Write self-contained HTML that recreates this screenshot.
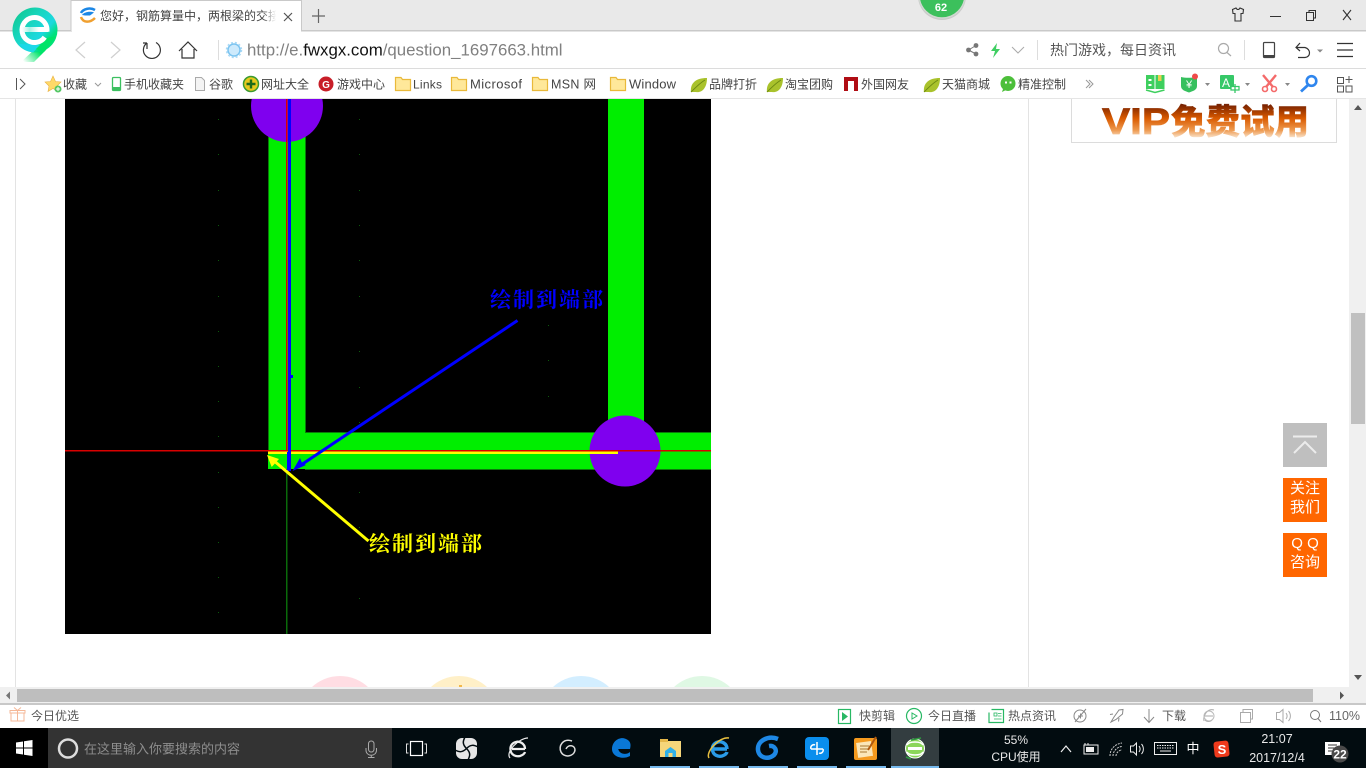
<!DOCTYPE html>
<html><head><meta charset="utf-8"><title>question</title>
<style>
html,body{margin:0;padding:0;width:1366px;height:768px;overflow:hidden;background:#fff}
svg{display:block;position:absolute;left:0;top:0}
text{white-space:pre}
</style></head><body>
<svg width="1366" height="768" viewBox="0 0 1366 768" font-family="'Liberation Sans','Noto Sans CJK SC',sans-serif" font-size="12" fill="#555">
<defs>
<linearGradient id="vip" gradientUnits="userSpaceOnUse" x1="0" y1="103" x2="0" y2="137"><stop offset="0" stop-color="#6b1a00"/><stop offset=".45" stop-color="#d95a00"/><stop offset=".8" stop-color="#ee9a50"/><stop offset="1" stop-color="#f8dcc0"/></linearGradient>
<linearGradient id="fade" x1="0" x2="1" y1="0" y2="0"><stop offset="0" stop-color="#fff" stop-opacity="0"/><stop offset="1" stop-color="#fff"/></linearGradient>
<linearGradient id="lg" gradientUnits="userSpaceOnUse" x1="14" y1="12" x2="56" y2="50"><stop offset="0" stop-color="#10c890"/><stop offset=".35" stop-color="#18d6c0"/><stop offset=".62" stop-color="#1cd8e0"/><stop offset=".78" stop-color="#00e080"/><stop offset="1" stop-color="#00e468"/></linearGradient>
<linearGradient id="lg2" gradientUnits="userSpaceOnUse" x1="48" y1="40" x2="24" y2="62"><stop offset="0" stop-color="#00e468"/><stop offset=".45" stop-color="#00e468"/><stop offset="1" stop-color="#00e468" stop-opacity="0"/></linearGradient>
<linearGradient id="lbar" gradientUnits="userSpaceOnUse" x1="22" y1="0" x2="48" y2="0"><stop offset="0" stop-color="#fff"/><stop offset=".3" stop-color="#a8f0e4"/><stop offset=".65" stop-color="#fff"/></linearGradient>
<clipPath id="main"><rect x="0" y="99" width="1366" height="588"/></clipPath>
<clipPath id="img"><rect x="65" y="99" width="646" height="535"/></clipPath>
<g id="folder"><path d="M-7.500-6.500h5.500l1.500 2h8v11h-15z" fill="#ffe89a" stroke="#e9b93a" stroke-width="1.200"/></g>
<g id="leaf"><path d="M-8 7C-9-2-3-7 8-7 8 3 3 8-3 7-5 7-6 7-8 7Z" fill="#a9c22c"/><path d="M-8 7C-3 2 1-2 6-5" stroke="#6d8a12" fill="none"/></g>
</defs>

<!-- page -->
<rect width="1366" height="768" fill="#fff"/>
<g clip-path="url(#main)">
<rect x="15" y="99" width="1" height="589" fill="#e3e3e3"/>
<rect x="1028" y="99" width="1" height="589" fill="#e3e3e3"/>
<circle cx="340" cy="717" r="41" fill="#ffdde3"/>
<circle cx="459" cy="717" r="41" fill="#fff0c8"/>
<rect x="459" y="685" width="3" height="3" fill="#f2b84a"/>
<circle cx="581" cy="717" r="41" fill="#d3eeff"/>
<circle cx="702" cy="717" r="41" fill="#dff8e4"/>
</g>

<!-- CAD image -->
<rect x="65" y="99" width="646" height="535" fill="#000"/>
<g clip-path="url(#img)">
<g fill="#0b5a0b">
<rect x="218" y="119" width="1" height="1"/><rect x="218" y="154" width="1" height="1"/><rect x="218" y="190" width="1" height="1"/><rect x="218" y="225" width="1" height="1"/><rect x="218" y="260" width="1" height="1"/><rect x="218" y="296" width="1" height="1"/><rect x="218" y="331" width="1" height="1"/><rect x="218" y="366" width="1" height="1"/><rect x="218" y="401" width="1" height="1"/><rect x="218" y="436" width="1" height="1"/><rect x="218" y="472" width="1" height="1"/><rect x="218" y="507" width="1" height="1"/><rect x="218" y="542" width="1" height="1"/><rect x="218" y="577" width="1" height="1"/><rect x="218" y="612" width="1" height="1"/>
<rect x="359" y="119" width="1" height="1"/><rect x="359" y="154" width="1" height="1"/><rect x="359" y="190" width="1" height="1"/><rect x="359" y="225" width="1" height="1"/><rect x="359" y="260" width="1" height="1"/><rect x="359" y="296" width="1" height="1"/><rect x="359" y="351" width="1" height="1"/><rect x="359" y="387" width="1" height="1"/><rect x="359" y="422" width="1" height="1"/><rect x="359" y="492" width="1" height="1"/><rect x="359" y="527" width="1" height="1"/><rect x="359" y="598" width="1" height="1"/>
<rect x="548" y="325" width="1" height="1"/><rect x="548" y="360" width="1" height="1"/><rect x="548" y="396" width="1" height="1"/>
</g>
<g shape-rendering="crispEdges">
<rect x="268" y="99" width="37" height="370" fill="#00ee00"/>
<rect x="268" y="432" width="443" height="37" fill="#00ee00"/>
<rect x="608" y="99" width="36" height="334" fill="#00ee00"/>
<rect x="268" y="99" width="1" height="351" fill="#0a7a0a"/>
<rect x="305" y="99" width="1" height="333" fill="#0a7a0a"/>
<rect x="305" y="432" width="406" height="1" fill="#0a7a0a"/>
<rect x="305" y="469" width="406" height="1" fill="#0a7a0a"/>
</g>
<circle cx="287" cy="106" r="36" fill="#7f00ef"/>
<circle cx="625" cy="451" r="35.500" fill="#7f00ef"/>
<g shape-rendering="crispEdges">
<rect x="268" y="451" width="350" height="3" fill="#ffff00"/>
<rect x="65" y="450" width="646" height="1.500" fill="#d80000"/>
<rect x="286" y="99" width="1.500" height="352" fill="#d80000"/>
<rect x="286" y="470" width="1.500" height="164" fill="#0a6a0a"/>
<rect x="288" y="99" width="3" height="353" fill="#0000ff"/>
<rect x="287" y="452" width="4" height="19" fill="#0000ff"/>
<rect x="290" y="375" width="3" height="3" fill="#0000ff"/>
</g>
<path d="M517.500 320.500L298 467" stroke="#0000ff" stroke-width="3" fill="none"/>
<path d="M292.500 471L300 458L302 463L306 465Z" fill="#0000ff"/>
<path d="M368.500 541L273 460" stroke="#ffff00" stroke-width="3" fill="none"/>
<path d="M267 455L279 459L271.700 467Z" fill="#ffff00"/>
<text x="490" y="307" font-family="'Noto Serif CJK SC',serif" font-size="21" font-weight="700" fill="#0000ff" letter-spacing="2">绘制到端部</text>
<text x="369" y="551" font-family="'Noto Serif CJK SC',serif" font-size="21" font-weight="700" fill="#ffff00" letter-spacing="2">绘制到端部</text>
</g>

<!-- VIP banner -->
<path d="M1071.500 99V142.500H1336.500V99" fill="#fff" stroke="#dcdcdc"/>
<text x="1102" y="134" font-family="'Liberation Sans',sans-serif" font-weight="700" font-size="37" fill="url(#vip)" stroke="url(#vip)" stroke-width=".8" textLength="68" lengthAdjust="spacingAndGlyphs">VIP</text>
<text x="1171" y="134" font-family="'Noto Sans CJK SC',sans-serif" font-weight="900" font-size="34.500" fill="url(#vip)" stroke="url(#vip)" stroke-width=".5">免费试用</text>

<!-- side buttons -->
<rect x="1283" y="423" width="44" height="44" fill="#bfbfbf"/>
<path d="M1293 436.500H1317M1294 453L1305 442L1316 453" stroke="#ececec" stroke-width="2" fill="none"/>
<rect x="1283" y="478" width="44" height="44" fill="#ff6600"/>
<rect x="1283" y="533" width="44" height="44" fill="#ff6600"/>
<g fill="#fff" font-size="15" text-anchor="middle">
<text x="1305" y="493">关注</text><text x="1305" y="512">我们</text>
<text x="1305" y="548">Q Q</text><text x="1305" y="567">咨询</text>
</g>

<!-- scrollbars -->
<rect x="1349" y="99" width="17" height="589" fill="#f0f0f0"/>
<rect x="1351" y="313" width="14" height="111" fill="#c0c0c0"/>
<path d="M1354 110L1358 105L1362 110Z" fill="#555"/>
<path d="M1354 675L1358 680L1362 675Z" fill="#555"/>
<rect x="0" y="687" width="1366" height="16" fill="#f0f0f0"/>
<rect x="17" y="689" width="1296" height="13" fill="#bebebe"/>
<path d="M10 691.500L6 695.500L10 699.500Z" fill="#777"/>
<path d="M1340 691.500L1344 695.500L1340 699.500Z" fill="#555"/>
<rect x="0" y="703" width="1366" height="2" fill="#c8c8c8"/>

<!-- tab strip -->
<rect x="0" y="0" width="1366" height="30" fill="#e9e9e9"/>
<rect x="0" y="30" width="1366" height="1.500" fill="#c9c9c9"/>
<path d="M71 31V.500H301.500V31" fill="#fff" stroke="#c9c9c9"/>
<rect x="72" y="30" width="229" height="2" fill="#fff"/>
<path d="M81 13C83 9 90 7 95 10" stroke="#1b87e6" stroke-width="2.500" fill="none"/>
<path d="M82 15C84 12 90 11 94 12.500L90 15.500H85Z" fill="#1b87e6"/>
<path d="M81 17C83 23 90 23 95 18" stroke="#f0a030" stroke-width="2.500" fill="none"/>
<text x="100" y="20" fill="#444">您好，钢筋算量中，两根梁的交接</text>
<rect x="262" y="7" width="14" height="18" fill="url(#fade)"/>
<rect x="276" y="7" width="8" height="18" fill="#fff"/>
<path d="M284 13L292 21M292 13L284 21" stroke="#555" stroke-width="1.200"/>
<path d="M318.500 9V23M312 16H325" stroke="#666" stroke-width="1.200" fill="none"/>
<!-- badge -->
<circle cx="942" cy="-4" r="24" fill="#aaa" opacity=".5"/>
<circle cx="942" cy="-5" r="23" fill="#3cc05c" stroke="#cfd8d0" stroke-width="1.500"/>
<text x="941" y="11" fill="#fff" font-size="11" font-weight="700" text-anchor="middle">62</text>
<!-- window controls -->
<path d="M1232.500 9.500L1236 8C1237 10 1239 10 1240 8L1243.500 9.500L1243 13.500H1241V21H1235V13.500H1233Z" fill="none" stroke="#333" stroke-width="1.100"/>
<rect x="1270" y="16" width="11" height="1" fill="#333"/>
<path d="M1306.500 12.500H1313.500V20.500H1306.500ZM1309 12.500V10.500H1315.500V18H1313.500" fill="none" stroke="#333"/>
<path d="M1343 10L1351 20M1351 10L1343 20" stroke="#333" stroke-width="1.100"/>

<!-- toolbar -->
<rect x="0" y="31.500" width="1366" height="36.500" fill="#fff"/>
<rect x="0" y="68" width="1366" height="1" fill="#dcdcdc"/>
<path d="M85 42L76 50L85 58" stroke="#cfcfcf" fill="none" stroke-width="1.200"/>
<path d="M111 42L120 50L111 58" stroke="#cfcfcf" fill="none" stroke-width="1.200"/>
<path d="M147 43A8.500 8.500 0 1 0 156 42.500M147 43V49M147 43H143" stroke="#333" fill="none" stroke-width="1.200"/>
<path d="M179 51L188 42L197 51M182 49V58H194V49" stroke="#333" fill="none" stroke-width="1.200"/>
<rect x="218" y="40" width="1" height="20" fill="#ddd"/>
<circle cx="234" cy="50" r="6" fill="#cdeafc" stroke="#7cc4f0" stroke-width="1.500"/>
<circle cx="234" cy="50" r="7.500" fill="none" stroke="#a8d9f6" stroke-width="1.500" stroke-dasharray="2 2"/>
<text x="247" y="55.500" font-size="16.850" fill="#808080">http://e.<tspan fill="#111">fwxgx.com</tspan>/question_1697663.html</text>
<g fill="#777"><circle cx="968.500" cy="50" r="2.400"/><circle cx="976" cy="45.500" r="2.400"/><circle cx="976" cy="54" r="2.400"/></g>
<path d="M968.500 50L976 45.500M968.500 50L976 54" stroke="#777"/>
<path d="M997 43L991 51H995L993 58L1000 49H996Z" fill="#3fce62"/>
<path d="M1012 47L1018 53L1024 47" stroke="#aaa" fill="none"/>
<rect x="1037" y="40" width="1" height="20" fill="#ddd"/>
<text x="1050" y="55" font-size="14" fill="#555">热门游戏，每日资讯</text>
<circle cx="1223.500" cy="48.500" r="5" fill="none" stroke="#aaa" stroke-width="1.200"/><path d="M1227 52.500L1231 56" stroke="#aaa" stroke-width="1.200"/>
<rect x="1244" y="40" width="1" height="20" fill="#ddd"/>
<rect x="1263.500" y="42.500" width="11" height="15" rx="1" fill="none" stroke="#444" stroke-width="1.200"/><rect x="1264" y="55" width="10" height="3" fill="#444"/>
<path d="M1300 43L1296 47.500L1300 51M1296 47.500H1305C1311 49 1311 57 1305 57.500H1298" stroke="#333" fill="none" stroke-width="1.200"/>
<path d="M1317 49.500L1320 52.500L1323 49.500Z" fill="#888"/>
<path d="M1337 43.500H1353M1337 50H1353M1337 56.500H1353" stroke="#333" stroke-width="1.200"/>

<!-- bookmarks -->
<rect x="0" y="69" width="1366" height="30" fill="#fff"/>
<rect x="0" y="98" width="1366" height="1" fill="#e5e5e5"/>
<path d="M16.500 78V90M20 79L25 84L20 89" stroke="#555" fill="none"/>
<path d="M53 76L55.500 81.500L61 82L57 86L58 91.500L53 88.500L48 91.500L49 86L45 82L50.500 81.500Z" fill="#ffd968" stroke="#e8b040" stroke-width=".6"/>
<circle cx="58" cy="89" r="3.500" fill="#55c765"/><path d="M58 87V91M56 89H60" stroke="#fff"/>
<path d="M95 83L98 86L101 83" stroke="#999" fill="none"/>
<rect x="112.500" y="77.500" width="8" height="13" rx="1" fill="none" stroke="#3cc060" stroke-width="1.300"/><rect x="113" y="87" width="7" height="4" fill="#3cc060"/>
<path d="M195.500 77.500H201.500L204.500 80.500V90.500H195.500Z" fill="#f4f4f4" stroke="#aaa"/>
<circle cx="251" cy="84" r="7.500" fill="#e6c91c"/><circle cx="251" cy="84" r="7.500" fill="none" stroke="#3a9a30" stroke-width="1.500"/><path d="M251 79.500V88.500M246.500 84H255.500" stroke="#1d6a1a" stroke-width="2.400"/>
<circle cx="326" cy="84" r="7.500" fill="#c81e28"/><text x="326" y="88" fill="#fff" font-size="10" font-weight="700" text-anchor="middle">G</text>
<use href="#folder" x="403" y="84"/><use href="#folder" x="459" y="84"/><use href="#folder" x="540" y="84"/><use href="#folder" x="618" y="84"/>
<use href="#leaf" x="699" y="85"/><use href="#leaf" x="775" y="85"/><use href="#leaf" x="932" y="85"/>
<path d="M844 77H858V91H854V81H848V91H844Z" fill="#b00d14"/>
<circle cx="1008" cy="83.500" r="7.500" fill="#4cbf3a"/><path d="M1003 89L1002 92L1006 90Z" fill="#4cbf3a"/><rect x="1005" y="81.500" width="2" height="2" fill="#fff"/><rect x="1009.500" y="81.500" width="2" height="2" fill="#fff"/>
<g fill="#444">
<text x="63" y="88.500">收藏</text>
<text x="124" y="88.500">手机收藏夹</text>
<text x="209" y="88.500">谷歌</text>
<text x="261" y="88.500">网址大全</text>
<text x="337" y="88.500">游戏中心</text>
<text x="413" y="88.500" textLength="29">Links</text>
<text x="470" y="88.500" font-size="13" textLength="52">Microsof</text>
<text x="551" y="88.500" font-size="12.500" textLength="45">MSN 网</text>
<text x="629" y="88.500" font-size="13" textLength="47">Window</text>
<text x="709" y="88.500">品牌打折</text>
<text x="785" y="88.500">淘宝团购</text>
<text x="861" y="88.500">外国网友</text>
<text x="942" y="88.500">天猫商城</text>
<text x="1018" y="88.500">精准控制</text>
</g>
<path d="M1086 80L1090 84L1086 88M1089 80L1093 84L1089 88" stroke="#999" fill="none"/>
<!-- right toolbar icons -->
<path d="M1146 75H1154.500V89H1146ZM1155.500 75H1164.500V89H1155.500Z" fill="#3ecf5e"/><path d="M1146 90L1155 92.500L1164.500 90" stroke="#3ecf5e" stroke-width="1.500" fill="none"/><rect x="1158" y="75" width="3.500" height="6" fill="#e8d050"/><rect x="1148.500" y="79" width="3" height="2" fill="#fff"/><rect x="1148.500" y="84" width="3" height="2" fill="#fff"/>
<path d="M1181 77C1186 78 1190 78 1197 77V86C1197 90 1193 91 1189 92.500C1185 91 1181 90 1181 86Z" fill="#36c05e"/><text x="1189" y="88" fill="#fff" font-size="11" text-anchor="middle">¥</text><circle cx="1195" cy="76.500" r="3" fill="#f04a4a"/>
<path d="M1205 83L1207.500 86L1210 83Z" fill="#888"/>
<rect x="1220" y="75" width="14" height="14" rx="1" fill="#36c868"/><text x="1226" y="87" fill="#fff" font-size="12" text-anchor="middle">A</text><path d="M1235 84V93M1231 86.500H1239V90H1231Z" stroke="#36c868" fill="#fff" stroke-width="1.300"/>
<path d="M1245 83L1247.500 86L1250 83Z" fill="#888"/>
<path d="M1263 75L1273 87M1276 75L1266 87" stroke="#f46a6a" stroke-width="2.400"/><circle cx="1265" cy="89" r="2.500" fill="none" stroke="#f46a6a" stroke-width="1.600"/><circle cx="1274" cy="89" r="2.500" fill="none" stroke="#f46a6a" stroke-width="1.600"/>
<path d="M1285 83L1287.500 86L1290 83Z" fill="#888"/>
<circle cx="1311.500" cy="81" r="4.800" fill="none" stroke="#2f86ee" stroke-width="2.600"/><path d="M1308 85L1301 91.500" stroke="#2f86ee" stroke-width="2.800"/>
<g fill="none" stroke="#555"><rect x="1337.500" y="77.500" width="6" height="6"/><rect x="1337.500" y="86" width="6" height="6"/><rect x="1346" y="86" width="6" height="6"/><path d="M1349 76V83M1345.500 79.500H1352.500"/></g>

<!-- logo -->
<path d="M56 36L46 50L34 62H21L36 48Z" fill="url(#lg2)"/>
<circle cx="35" cy="30" r="22.500" fill="url(#lg)"/>
<path d="M19 44C22 48 27 51 33 52.500L40 45Z" fill="#1cd8e8"/>
<path d="M44 52L56 36L47 38L36 49Z" fill="#00e468"/>
<circle cx="34.500" cy="30" r="12.500" fill="none" stroke="#fff" stroke-width="5" stroke-dasharray="72 6.500" transform="rotate(35 34.500 30)"/>
<rect x="22" y="27" width="26" height="5" fill="url(#lbar)"/>

<!-- status bar -->
<rect x="0" y="705" width="1366" height="23" fill="#fff"/>
<path d="M11 713H24V721H11ZM10 710.500H25V713H10ZM17.500 710.500V721M14 707.500L17.500 710.500L21 707.500" fill="none" stroke="#f5b898"/>
<text x="31" y="720">今日优选</text>
<rect x="838.500" y="709.500" width="12" height="14" fill="none" stroke="#28b864" stroke-width="1.200"/><path d="M842 712V721L848 716.500Z" fill="#28b864"/>
<text x="859" y="720">快剪辑</text>
<circle cx="914" cy="716" r="7.500" fill="none" stroke="#28b864" stroke-width="1.200"/><path d="M912 713V719L917 716Z" fill="none" stroke="#28b864"/>
<text x="928" y="720">今日直播</text>
<path d="M991.500 709.500H1003.500V722.500H989V712.500" fill="none" stroke="#28b864" stroke-width="1.200"/><rect x="994" y="713" width="3" height="3" fill="none" stroke="#28b864" stroke-width=".8"/><path d="M998 713.500H1001.500M998 716H1001.500M994 719H1001.500" stroke="#28b864" stroke-width=".8"/>
<text x="1008" y="720">热点资讯</text>
<circle cx="1080" cy="716" r="6" fill="none" stroke="#888"/><path d="M1075 722L1086 709M1078 716H1083M1080.500 713.500V718.500" stroke="#888" fill="none"/>
<path d="M1111 722L1114 717L1119 710L1123 709.500L1122.500 714L1116 719.500ZM1113 714L1110 714.500M1119 718L1118.500 721.500" fill="none" stroke="#888"/>
<path d="M1149 709V722M1144 717L1149 722.500L1154 717" fill="none" stroke="#888"/>
<text x="1162" y="720">下载</text>
<path d="M1214 710C1207 708 1203 716 1204 721M1204 716H1213M1212 720C1210 722 1207 722 1205 720" fill="none" stroke="#aaa"/><circle cx="1209" cy="716" r="5" fill="none" stroke="#bbb"/>
<path d="M1240.500 712.500H1250.500V722.500H1240.500ZM1243 712.500V709.500H1252.500V719H1250.500" fill="none" stroke="#aaa"/>
<path d="M1276.500 712.500H1279.500L1283 709.500V722.500L1279.500 719.500H1276.500ZM1286 713C1287.500 715 1287.500 717 1286 719M1288.500 711C1291 714 1291 718 1288.500 721" fill="none" stroke="#aaa"/>
<circle cx="1315" cy="715" r="4.500" fill="none" stroke="#777"/><path d="M1318 718.500L1321 722" stroke="#777"/>
<text x="1329" y="720" font-size="12.500" fill="#666">110%</text>

<!-- taskbar -->
<rect x="0" y="728" width="1366" height="40" fill="#020c10"/>
<rect x="0" y="728" width="48" height="40" fill="#000"/>
<rect x="48" y="728" width="344" height="40" fill="#333"/>
<path d="M16 742.500L23 741.500V747.500H16ZM24 741.300L32.500 740V747.500H24ZM16 748.500H23V754.500L16 753.500ZM24 748.500H32.500V756L24 754.700Z" fill="#fff"/>
<circle cx="68" cy="748.500" r="9" fill="none" stroke="#ddd" stroke-width="2.500"/>
<text x="84" y="753.500" font-size="13" fill="#8d8d8d">在这里输入你要搜索的内容</text>
<rect x="368.500" y="741" width="5.500" height="11" rx="2.700" fill="none" stroke="#aaa"/><path d="M366 748V750C366 757 376.500 757 376.500 750V748M371.300 755V757.500M368 757.500H374.500" fill="none" stroke="#aaa"/>
<rect x="410.500" y="741.500" width="12" height="14" fill="none" stroke="#fff" stroke-width="1.200"/><path d="M408.500 744H406.500V753H408.500M424.500 744H426.500V753H424.500" fill="none" stroke="#ddd"/>
<rect x="456" y="738" width="21" height="21" rx="6" fill="#e6e6e6"/>
<path d="M466.500 748.500C462 744 463 741 465 737M466.500 748.500C471 744 474 745 478 747M466.500 748.500C471 753 470 756 468 760M466.500 748.500C462 753 459 752 455 750" fill="none" stroke="#020c10" stroke-width="1.500"/>
<path d="M525 749H512M525 749C525 743 519 741 516 742C512 743 510 746 510.500 750C511 755 516 757 520 756C523 755 524.500 754 525 752" fill="none" stroke="#eee" stroke-width="2.300"/><path d="M510 758C505 752 519 738 528 738" fill="none" stroke="#eee" stroke-width="1.200"/>
<path d="M572 741C563 738 558 746 561 752C564 758 574 757 575 750C575 745 568 744 566 749" fill="none" stroke="#ddd" stroke-width="1.500"/>
<path d="M630 749H616C616 743 625 743 625 747H618C618 755 627 755 630 752V756C623 760 612 757 612 749C612 741 620 736 626 739C631 741 631 745 630 749Z" fill="#0a78d7"/>
<path d="M660 739H666L668 741H681V757H660Z" fill="#f6d67a"/><rect x="660" y="739" width="8" height="3" fill="#e6b84a"/><path d="M665 757V751L670.500 747L676 751V757H672.500V753H668.500V757Z" fill="#30b0e8"/>
<path d="M727 749H714M727 749C727 743 721 741 718 742C714 743 712 746 712.500 750C713 755 718 757 722 756C725 755 726.500 754 727 752" fill="none" stroke="#2a9be8" stroke-width="3.400"/>
<path d="M709 758C705 752 720 736 729 738" fill="none" stroke="#e8c040" stroke-width="1.500"/>
<path d="M778 739C768 735 757 741 758 750C759 758 768 760 774 755C778 751 775 745 769 746" fill="none" stroke="#1e88e5" stroke-width="4.500"/>
<rect x="805" y="737" width="24" height="23" rx="4" fill="#0a8eed"/><path d="M817 742V755M811 749H823M811 749C810 746 813 744 815 745M823 749C824 752 821 754 819 753" stroke="#fff" stroke-width="1.500" fill="none"/>
<rect x="854" y="738" width="23" height="22" rx="2" fill="#f59a1e"/><rect x="857" y="742" width="15" height="15" fill="#fbe6b8" transform="rotate(-8 864 749)"/><path d="M860 746H869M860 749H869M860 752H867" stroke="#a87830"/><path d="M876 737L868 750" stroke="#b05a10" stroke-width="2"/>
<rect x="891" y="728" width="48" height="40" fill="#333d40"/>
<circle cx="915" cy="748.500" r="9.500" fill="#8bd65a" stroke="#fff" stroke-width="1"/><rect x="908" y="747" width="14" height="3" fill="#fff"/><path d="M907 745C909 741 921 741 923 745M907 752C909 756 921 756 923 752" fill="none" stroke="#fff" stroke-width="1.500"/><path d="M911 740L921 738M906 757L911 759" stroke="#2e9a3e" stroke-width="1.500"/>
<g fill="#76b9ed"><rect x="650" y="766" width="40" height="2"/><rect x="699" y="766" width="40" height="2"/><rect x="748" y="766" width="40" height="2"/><rect x="797" y="766" width="40" height="2"/><rect x="846" y="766" width="40" height="2"/><rect x="891" y="766" width="48" height="2"/></g>
<g fill="#e8e8e8" text-anchor="middle">
<text x="1016" y="744">55%</text><text x="1016" y="761">CPU使用</text>
<text x="1277" y="743" font-size="12.500">21:07</text><text x="1277" y="762" font-size="12.500">2017/12/4</text>
<text x="1193" y="753" font-size="13" fill="#fff">中</text>
</g>
<path d="M1061 752L1066 746L1071 752" stroke="#eee" fill="none" stroke-width="1.200"/>
<rect x="1084" y="745" width="14" height="9" fill="none" stroke="#eee"/><rect x="1086" y="747" width="8" height="5" fill="#eee"/><path d="M1085 743V745M1088 743V745" stroke="#eee"/>
<path d="M1110 756C1110 749 1115 744 1122 743M1113 756C1113 751 1117 747 1122 746.500M1116 756C1116 753 1119 750 1122 750" stroke="#ccc" fill="none" stroke-dasharray="2 1"/>
<path d="M1130.500 746H1133.500L1136.500 743V755L1133.500 752H1130.500ZM1139 746C1140.500 748 1140.500 750 1139 752M1141.500 744C1144 747 1144 751 1141.500 754" fill="none" stroke="#eee"/>
<rect x="1154.500" y="742.500" width="22" height="12" fill="none" stroke="#eee"/><path d="M1157 745.500H1174M1157 748H1174" stroke="#eee" stroke-dasharray="1.500 1"/><path d="M1160 751H1171" stroke="#eee"/>
<rect x="1214" y="741" width="15" height="16" rx="3" fill="#ee3a1c" transform="rotate(-6 1222 749)"/><text x="1222" y="754" fill="#fff" font-size="13" font-weight="700" text-anchor="middle">S</text>
<rect x="1325" y="742" width="15" height="13" fill="#fff"/><path d="M1328 745H1337M1328 748H1337M1328 751H1334" stroke="#333"/>
<circle cx="1340" cy="754" r="8.500" fill="#4a4a4a"/><text x="1340" y="758.500" fill="#fff" font-size="12" font-weight="700" text-anchor="middle">22</text>
</svg>
</body></html>
